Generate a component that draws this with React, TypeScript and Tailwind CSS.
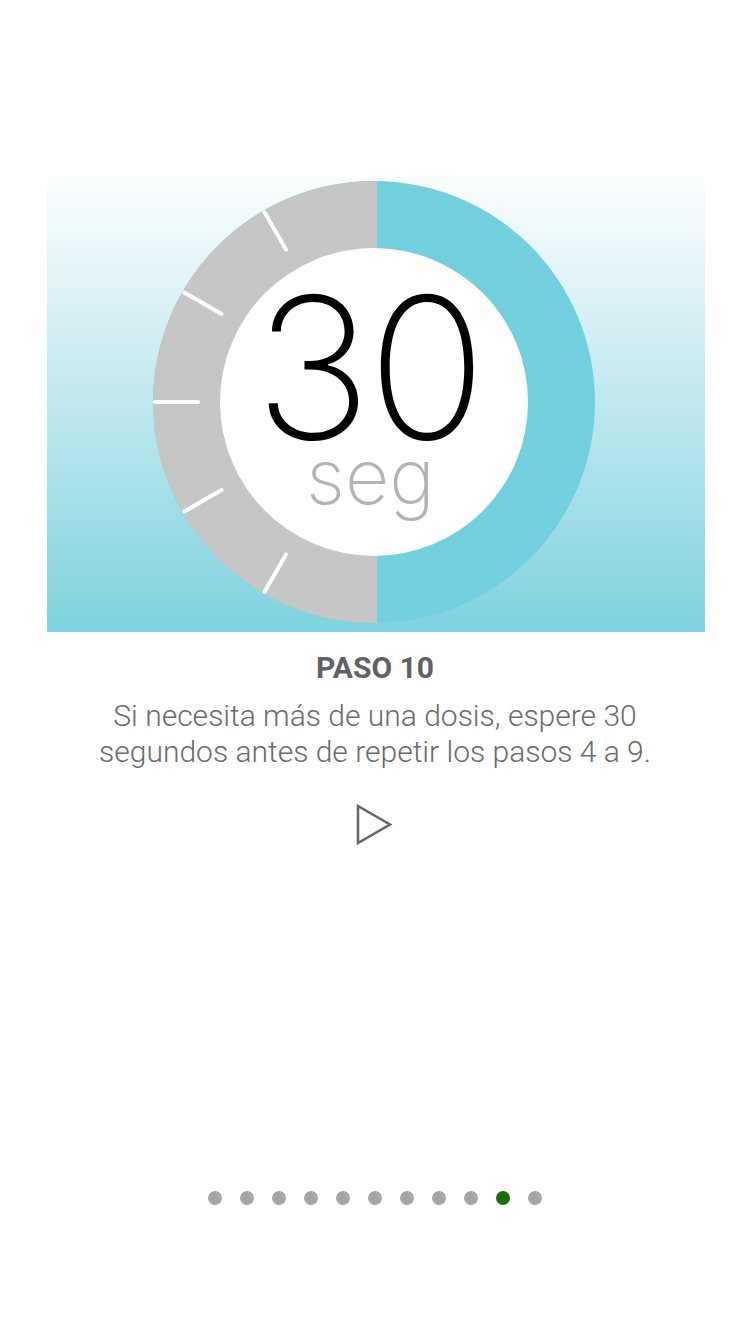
import React from "react";

const CX = 327;
const CY = 226;
const RO = 221;
const RI = 154;

function Ring() {
  const ticks = [30, 60, 90, 120, 150];
  return (
    <svg width="658" height="456" viewBox="0 0 658 456" className="block">
      <defs>
        <clipPath id="leftHalf">
          <rect x="0" y="0" width={CX + 3} height="456" />
        </clipPath>
      </defs>
      <circle cx={CX} cy={CY} r={RO} fill="#72d0de" />
      <circle cx={CX} cy={CY} r={RO} fill="#c6c6c6" clipPath="url(#leftHalf)" />
      {ticks.map((a) => {
        const rad = (a * Math.PI) / 180;
        const sx = -Math.sin(rad);
        const sy = -Math.cos(rad);
        return (
          <line
            key={a}
            x1={CX + sx * (RO - 2)}
            y1={CY + sy * (RO - 2)}
            x2={CX + sx * (RO - 45)}
            y2={CY + sy * (RO - 45)}
            stroke="#ffffff"
            strokeWidth="4"
            strokeLinecap="round"
          />
        );
      })}
      <circle cx={CX} cy={CY} r={RI} fill="#ffffff" />
    </svg>
  );
}

export default function App() {
  const dots = Array.from({ length: 11 }, (_, i) => i);
  return (
    <div
      className="w-[750px] h-[1334px] bg-white flex flex-col items-center overflow-hidden"
      style={{ fontFamily: "Roboto, 'Liberation Sans', sans-serif" }}
    >
      <div className="mt-[176px] w-[658px] h-[456px] ml-[1px] relative bg-gradient-to-b from-[#fbfdfe] to-[#7dd2df]">
        <Ring />
        <div
          className="absolute inset-0 flex flex-col items-center"
          style={{ fontFamily: "Inter, Roboto, sans-serif" }}
        >
          <div className="mt-[119px] ml-[-14px] text-[197px] leading-[146px] font-extralight text-black tracking-[-4px]">
            30
          </div>
          <div className="mt-[6px] ml-[-10px] text-[77px] leading-[58px] font-extralight text-[#b3b3b3]">
            seg
          </div>
        </div>
      </div>
      <div className="mt-[16px] text-[30px] leading-[40px] font-bold text-[#5f6165]">PASO 10</div>
      <div className="mt-[10px] text-[30px] leading-[36px] font-light text-[#6b6b6b] text-center">
        Si necesita más de una dosis, espere 30
        <br />
        segundos antes de repetir los pasos 4 a 9.
      </div>
      <svg width="40" height="44" viewBox="0 0 40 44" className="mt-[33px] ml-[-1px]">
        <polygon points="3,3 35,21.5 3,40" fill="none" stroke="#666666" strokeWidth="2.5" strokeLinejoin="miter" />
      </svg>
      <div className="mt-[344px] flex gap-[18px]">
        {dots.map((i) => (
          <div
            key={i}
            className={i === 9 ? "w-[14px] h-[14px] rounded-full bg-[#1c6b0c]" : "w-[14px] h-[14px] rounded-full bg-[#a6a6a6]"}
          />
        ))}
      </div>
    </div>
  );
}
